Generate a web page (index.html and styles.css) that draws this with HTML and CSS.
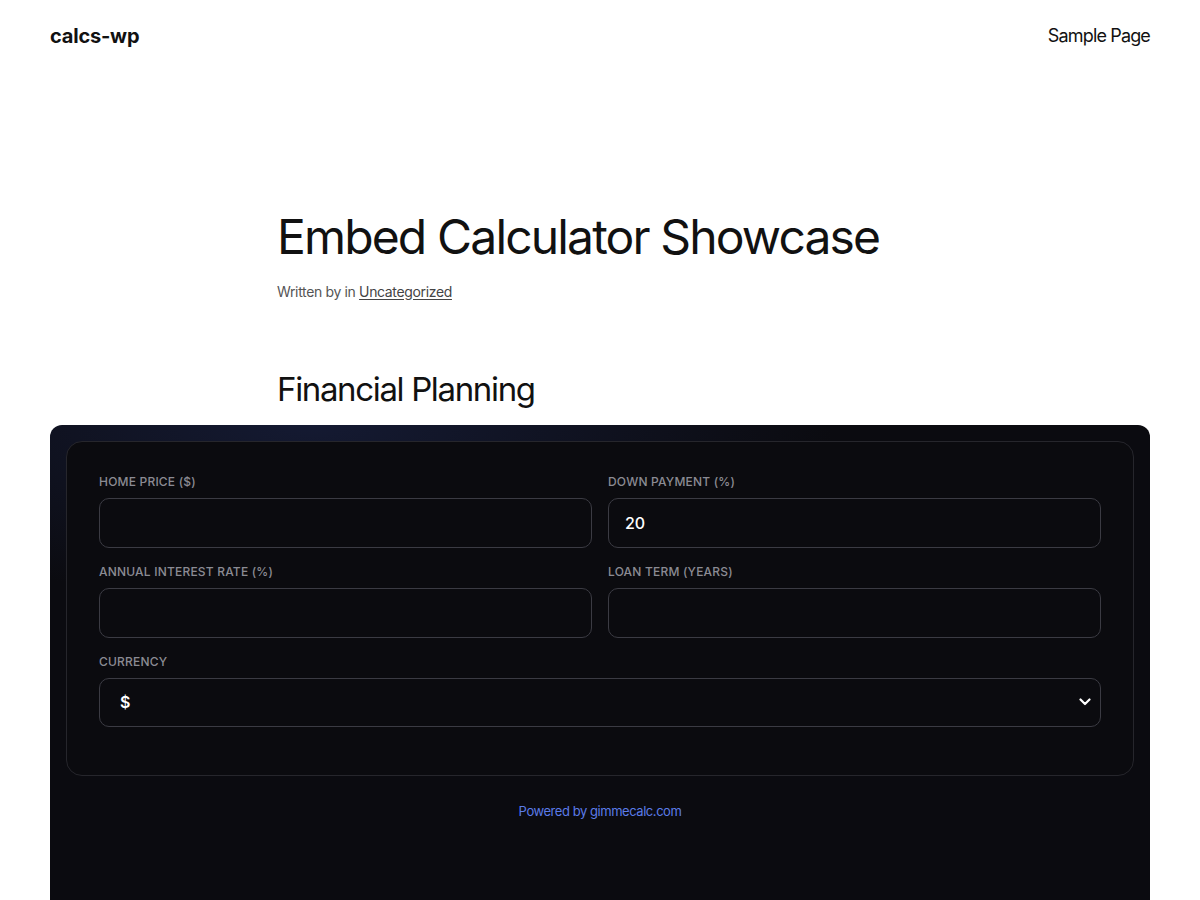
FILE: index.html
```html
<!DOCTYPE html>
<html lang="en">
<head>
<meta charset="utf-8">
<title>Embed Calculator Showcase – calcs-wp</title>
<link rel="stylesheet" href="styles.css">
</head>
<body>
<header class="site-header">
  <a class="site-title" href="#">calcs-wp</a>
  <nav class="site-nav"><a href="#">Sample Page</a></nav>
</header>
<main class="site-main">
  <div class="content">
    <h1 class="post-title">Embed Calculator Showcase</h1>
    <p class="post-meta">Written by in <a href="#">Uncategorized</a></p>
    <h2 class="section-title">Financial Planning</h2>
  </div>
  <section class="calc-embed">
    <form class="calc-card">
      <div class="field">
        <label class="field-label">Home Price ($)</label>
        <input class="field-input" type="text" value="">
      </div>
      <div class="field">
        <label class="field-label">Down Payment (%)</label>
        <input class="field-input" type="text" value="20">
      </div>
      <div class="field">
        <label class="field-label">Annual Interest Rate (%)</label>
        <input class="field-input" type="text" value="">
      </div>
      <div class="field">
        <label class="field-label">Loan Term (Years)</label>
        <input class="field-input" type="text" value="">
      </div>
      <div class="field field-wide">
        <label class="field-label">Currency</label>
        <div class="select-wrap">
          <select class="field-select"><option>$</option></select>
          <svg class="chev" width="12" height="8" viewBox="0 0 12 8"><path d="M1.5 1.5 L6 6 L10.5 1.5" fill="none" stroke="#fff" stroke-width="2.2" stroke-linecap="round" stroke-linejoin="round"/></svg>
        </div>
      </div>
    </form>
    <p class="powered">Powered by gimmecalc.com</p>
  </section>
</main>
</body>
</html>
```
FILE: styles.css
```css
* { box-sizing: border-box; }
html, body { margin: 0; padding: 0; background: #fff; }
body {
  font-family: Inter, "Noto Sans", "Liberation Sans", sans-serif;
  color: #111;
  overflow: hidden;
}
a { color: inherit; }
.site-header {
  height: 71px;
  padding: 0 50px;
  display: flex;
  align-items: center;
  justify-content: space-between;
}
.site-title {
  font-size: 20px;
  font-weight: 700;
  text-decoration: none;
  letter-spacing: -0.2px;
  color: #111;
}
.site-nav a {
  font-size: 18px;
  text-decoration: none;
  letter-spacing: -0.85px;
  color: #111;
}
.site-main { padding: 0 50px; }
.content {
  width: 646px;
  margin: 0 auto;
  padding-top: 137px;
}
.post-title {
  margin: 0;
  font-size: 48px;
  font-weight: 400;
  line-height: 1.2;
  letter-spacing: -1.85px;
  color: #111;
}
.post-meta {
  margin: 15px 0 0;
  font-size: 14px;
  line-height: 22px;
  color: #555;
  letter-spacing: -0.35px;
}
.post-meta a { color: #444; text-decoration: underline; text-underline-offset: 2px; }
.section-title {
  margin: 66px 0 0;
  font-size: 33px;
  font-weight: 400;
  line-height: 41px;
  letter-spacing: -1.35px;
  color: #111;
}
.calc-embed {
  margin-top: 15px;
  height: 560px;
  border-radius: 12px 12px 0 0;
  background:
    radial-gradient(ellipse 520px 180px at 24% 0%, rgba(28,38,78,0.55), rgba(11,11,16,0) 100%),
    #0b0b10;
  padding: 16px;
}
.calc-card {
  margin: 0;
  border: 1px solid #26262c;
  border-radius: 16px;
  background: #0b0b0f;
  padding: 32px 32px 48px;
  display: grid;
  grid-template-columns: 1fr 1fr;
  column-gap: 16px;
  row-gap: 16px;
}
.field { display: flex; flex-direction: column; gap: 8px; }
.field-wide { grid-column: 1 / -1; }
.field-label {
  font-size: 12px;
  line-height: 16px;
  font-weight: 500;
  text-transform: uppercase;
  color: #8b8b94;
  letter-spacing: 0.2px;
}
.field-input, .field-select {
  height: 50px;
  width: 100%;
  border: 1px solid #3b3b43;
  border-radius: 10px;
  background: #0b0b0f;
  color: #fff;
  font-family: inherit;
  font-size: 16px;
  font-weight: 500;
  padding: 0 16px;
  outline: none;
}
.select-wrap { position: relative; }
.field-select {
  height: 49px;
  -webkit-appearance: none;
  appearance: none;
  padding: 0 20px;
  font-weight: 600;
}
.chev {
  position: absolute;
  right: 10px;
  top: 20px;
  pointer-events: none;
}
.powered {
  margin: 26px 0 0;
  text-align: center;
  font-size: 13px;
  line-height: 18px;
  color: #5b7be8;
  letter-spacing: -0.45px;
}
```
